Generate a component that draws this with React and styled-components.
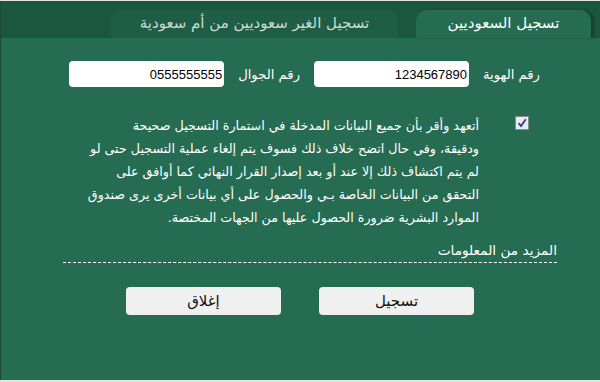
import styled, { createGlobalStyle } from "styled-components";

const Global = createGlobalStyle`
  html, body { margin: 0; padding: 0; background: #e4e4e4; }
  body { font-family: "DejaVu Sans", sans-serif; }
`;

const Frame = styled.div`
  direction: rtl;
  width: 599px;
  height: 379px;
  margin-top: 1px;
  border-left: 1px solid #1d4a37;
  background: #256c52;
  display: flex;
  flex-direction: column;
  font-family: "DejaVu Sans", sans-serif;
`;

const TabBar = styled.div`
  height: 37px;
  background: #1b5640;
  display: flex;
  align-items: flex-end;
  gap: 18px;
  padding-right: 9px;
`;

const Tab = styled.div`
  height: 28px;
  width: ${(p) => p.w}px;
  box-sizing: border-box;
  border-radius: 11px 11px 0 0;
  background: ${(p) => (p.active ? "#256c52" : "#1f5e46")};
  color: ${(p) => (p.active ? "#ffffff" : "#c9dbd2")};
  box-shadow: ${(p) => (p.active ? "3px 0 3px rgba(0,0,0,0.25)" : "none")};
  font-size: 15px;
  display: flex;
  align-items: center;
  justify-content: center;
  padding-bottom: 3px;
`;

const Body = styled.div`
  padding: 23px 60px 0 0;
  display: flex;
  flex-direction: column;
`;

const FieldRow = styled.div`
  display: flex;
  align-items: center;
  gap: 14px;
`;

const Label = styled.span`
  color: #ffffff;
  font-size: 13.2px;
`;

const Input = styled.input`
  direction: ltr;
  text-align: right;
  width: 155px;
  height: 26px;
  box-sizing: border-box;
  border: none;
  border-radius: 4px;
  background: #ffffff;
  padding: 0 2px;
  font-family: "Liberation Sans", sans-serif;
  font-size: 13px;
  color: #000;
`;

const Pledge = styled.div`
  display: flex;
  align-items: flex-start;
  margin-top: 29px;
`;

const Check = styled.div`
  width: 12px;
  height: 12px;
  margin-top: 0;
  margin-right: 11px;
  margin-left: 36px;
  border: 1px solid #8a8a8a;
  background: #e8ecf4;
  display: flex;
  align-items: center;
  justify-content: center;
`;

const Text = styled.p`
  margin: 0;
  margin-top: -2px;
  color: #ffffff;
  font-size: 12.7px;
  line-height: 23px;
  white-space: nowrap;
`;

const More = styled.div`
  margin-top: 13px;
  margin-left: 62px;
  margin-right: -17px;
  color: #ffffff;
  font-size: 13.7px;
  padding-bottom: 4px;
  border-bottom: 1px dashed #ffffff;
`;

const Actions = styled.div`
  display: flex;
  gap: 38px;
  margin-top: 24px;
  padding-right: 66px;
`;

const Button = styled.button`
  width: 155px;
  height: 28px;
  border: none;
  border-radius: 4px;
  background: #f0f0f0;
  font-family: "DejaVu Sans", sans-serif;
  font-size: 15px;
  color: #111;
`;

export default function App() {
  return (
    <>
      <Global />
      <Frame>
        <TabBar>
          <Tab active w={175}>تسجيل السعوديين</Tab>
          <Tab w={287}>تسجيل الغير سعوديين من أم سعودية</Tab>
        </TabBar>
        <Body>
          <FieldRow>
            <Label>رقم الهوية</Label>
            <Input defaultValue="1234567890" />
            <Label>رقم الجوال</Label>
            <Input defaultValue="0555555555" />
          </FieldRow>
          <Pledge>
            <Check>
              <svg width="10" height="10" viewBox="0 0 10 10">
                <path d="M1.5 5.2 L4 8 L8.8 1.2" fill="none" stroke="#2b3aa0" strokeWidth="1.8" />
              </svg>
            </Check>
            <Text>
              أتعهد وأقر بأن جميع البيانات المدخلة في استمارة التسجيل صحيحة
              <br />
              ودقيقة، وفي حال اتضح خلاف ذلك فسوف يتم إلغاء عملية التسجيل حتى لو
              <br />
              لم يتم اكتشاف ذلك إلا عند أو بعد إصدار القرار النهائي كما أوافق على
              <br />
              التحقق من البيانات الخاصة بـي والحصول على أي بيانات أخرى يرى صندوق
              <br />
              الموارد البشرية ضرورة الحصول عليها من الجهات المختصة.
            </Text>
          </Pledge>
          <More>المزيد من المعلومات</More>
          <Actions>
            <Button>تسجيل</Button>
            <Button>إغلاق</Button>
          </Actions>
        </Body>
      </Frame>
    </>
  );
}
